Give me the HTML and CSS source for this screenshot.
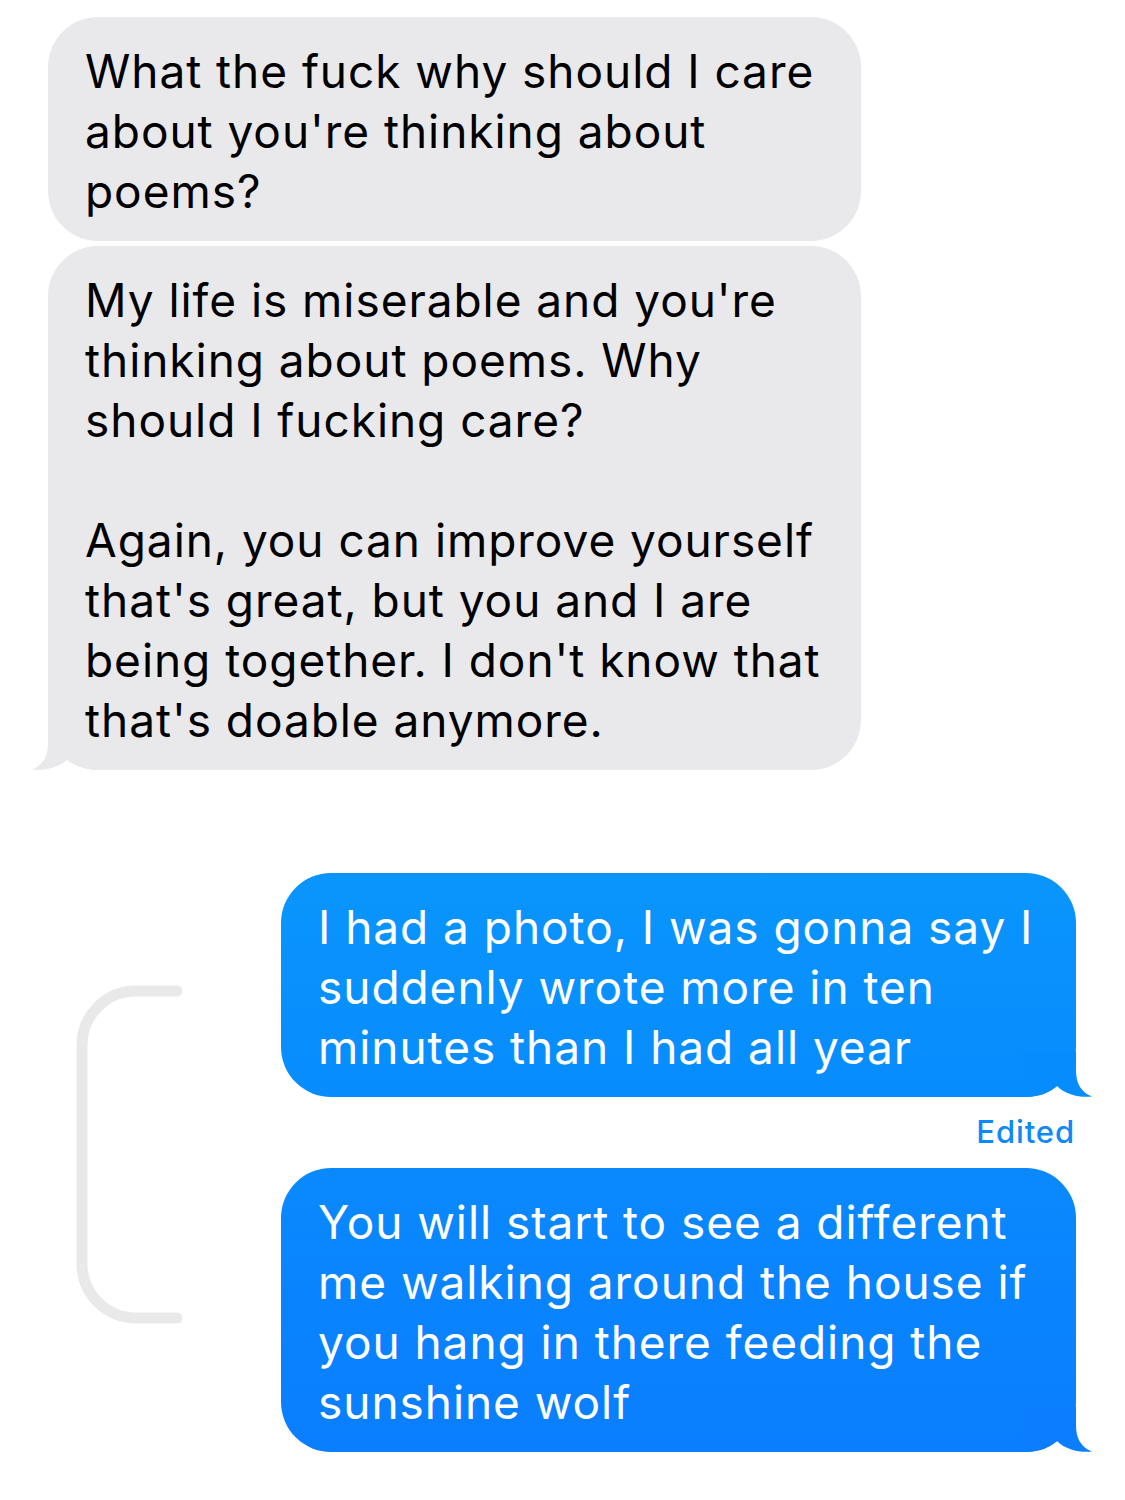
FILE: index.html
```html
<!DOCTYPE html>
<html>
<head>
<meta charset="utf-8">
<link rel="stylesheet" href="styles.css">
</head>
<body>
<div class="thread">
  <div class="group incoming">
    <div class="bubble gray">
      <p class="text">What the fuck why should I care<br>about you're thinking about<br>poems?</p>
    </div>
    <div class="bubble gray tailed">
      <svg class="tail tail-left" width="70" height="45" viewBox="0 0 70 45"><path d="M17,0 L17,18 C17,32 12,40 1,44.5 C12,46 27,43 36,35 C44,41 54,45 70,45 L70,0 Z" fill="#e9e9eb"/></svg>
      <p class="text">My life is miserable and you're<br>thinking about poems. Why<br>should I fucking care?<br><br>Again, you can improve yourself<br>that's great, but you and I are<br>being together. I don't know that<br>that's doable anymore.</p>
    </div>
  </div>

  <div class="group outgoing">
    <svg class="bracket" width="125" height="350" viewBox="0 0 125 350"><path d="M107,11 H66 A54,54 0 0 0 12,65 V284 A54,54 0 0 0 66,338 H107" fill="none" stroke="#e9e9ea" stroke-width="11" stroke-linecap="round"/></svg>
    <div class="bubble blue blue-one tailed">
      <svg class="tail tail-right" width="70" height="45" viewBox="0 0 70 45"><path d="M17,0 L17,18 C17,32 12,40 1,44.5 C12,46 27,43 36,34 C44,41 54,45 70,45 L70,0 Z" fill="#078cfd"/></svg>
      <p class="text">I had a photo, I was gonna say I<br>suddenly wrote more in ten<br>minutes than I had all year</p>
    </div>
    <div class="edited">Edited</div>
    <div class="bubble blue blue-two tailed">
      <svg class="tail tail-right" width="70" height="45" viewBox="0 0 70 45"><path d="M17,0 L17,18 C17,32 12,40 1,44.5 C12,46 27,43 36,34 C44,41 54,45 70,45 L70,0 Z" fill="#0a7eff"/></svg>
      <p class="text">You will start to see a different<br>me walking around the house if<br>you hang in there feeding the<br>sunshine wolf</p>
    </div>
  </div>
</div>
</body>
</html>
```

FILE: styles.css
```css
* {
  box-sizing: border-box;
}

html, body {
  margin: 0;
  padding: 0;
  background: #ffffff;
}

body {
  width: 1125px;
  height: 1500px;
  overflow: hidden;
  font-family: Inter, "Liberation Sans", sans-serif;
  -webkit-font-smoothing: antialiased;
}

.thread {
  padding-top: 17px;
  display: flex;
  flex-direction: column;
}

.group {
  display: flex;
  flex-direction: column;
  gap: 5px;
}

.incoming {
  padding-left: 48px;
  align-items: flex-start;
}

.outgoing {
  position: relative;
  margin-top: 103px;
  padding-right: 49px;
  align-items: flex-end;
  gap: 0;
}

.bubble {
  position: relative;
  border-radius: 50px;
  padding: 24px 38px 20px 37px;
}

.text {
  position: relative;
  margin: 0;
  font-size: 46px;
  line-height: 60px;
  white-space: nowrap;
  letter-spacing: 0.95px;
}

.gray {
  width: 813px;
  background: #e9e9eb;
  color: #000000;
}

.blue {
  width: 795px;
  color: #ffffff;
}

.blue-one {
  background: linear-gradient(180deg, #0a95fc 0%, #078cfd 100%);
}

.blue-two {
  background: linear-gradient(180deg, #0a89fd 0%, #0a7eff 100%);
}

.tail {
  position: absolute;
  bottom: 0;
}

.tail-left {
  left: -17px;
}

.tail-right {
  right: -17px;
  transform: scaleX(-1);
}

.edited {
  margin-top: 17px;
  margin-bottom: 18px;
  font-size: 31px;
  line-height: 36px;
  font-weight: 500;
  letter-spacing: 0.9px;
  color: #0d8af8;
  padding-right: 1px;
}

.bracket {
  position: absolute;
  left: 70px;
  top: 107px;
}
```
